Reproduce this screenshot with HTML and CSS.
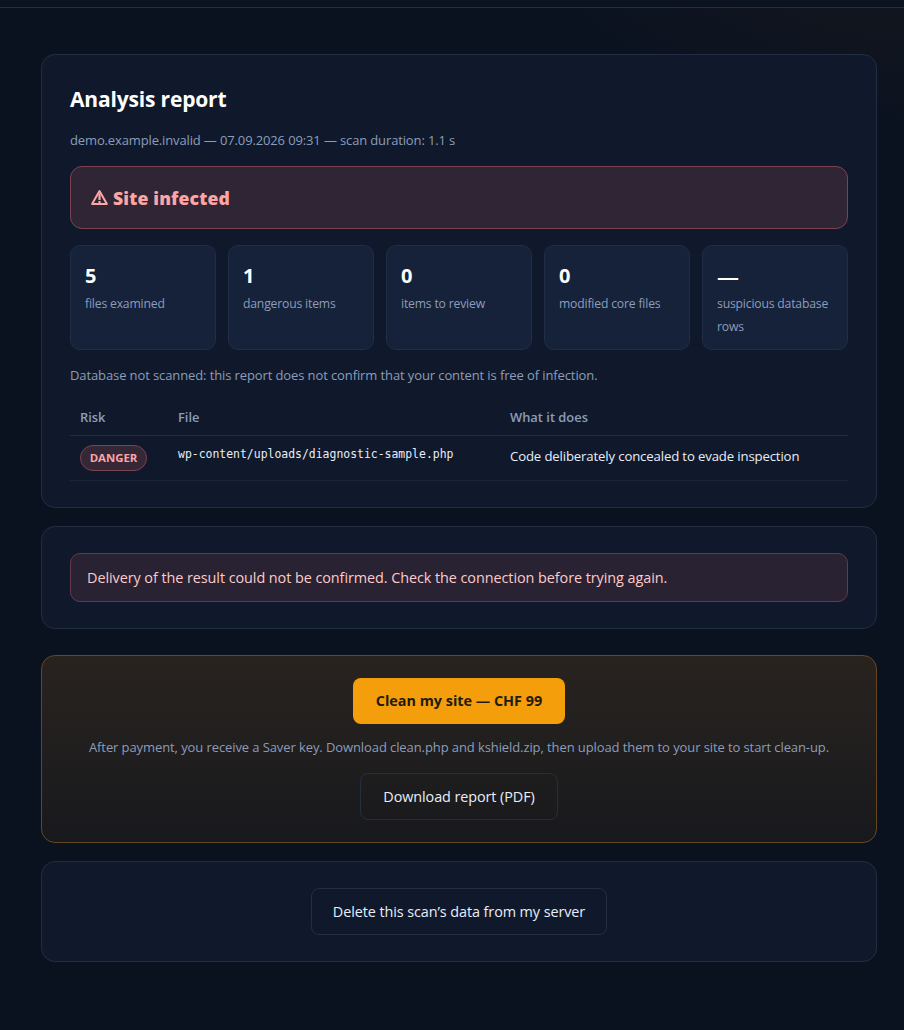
FILE: index.html
```html
<!DOCTYPE html>
<html lang="en">
<head>
<meta charset="utf-8">
<title>Analysis report</title>
<link rel="stylesheet" href="styles.css">
</head>
<body>
<header class="topbar"></header>
<main class="page">
  <section class="card report">
    <h1 class="title">Analysis report</h1>
    <p class="meta">demo.example.invalid — 07.09.2026 09:31 — scan duration: 1.1 s</p>
    <div class="verdict">
      <svg class="verdict-icon" width="18" height="17" viewBox="0 0 18 17" fill="none" stroke="currentColor"><path d="M8.5 2 15.9 15H1.1Z" stroke-width="2" stroke-linejoin="round"/><path d="M8.5 4.5V11M8.5 12V14" stroke-width="2.2"/></svg>
      <span>Site infected</span>
    </div>
    <div class="stats">
      <div class="stat"><b>5</b><span>files examined</span></div>
      <div class="stat"><b>1</b><span>dangerous items</span></div>
      <div class="stat"><b>0</b><span>items to review</span></div>
      <div class="stat"><b>0</b><span>modified core files</span></div>
      <div class="stat"><b class="empty">—</b><span>suspicious database rows</span></div>
    </div>
    <p class="note">Database not scanned: this report does not confirm that your content is free of infection.</p>
    <table class="findings">
      <thead><tr><th class="col-risk">Risk</th><th class="col-file">File</th><th>What it does</th></tr></thead>
      <tbody><tr>
        <td><span class="badge">DANGER</span></td>
        <td><code>wp-content/uploads/diagnostic-sample.php</code></td>
        <td class="desc">Code deliberately concealed to evade inspection</td>
      </tr></tbody>
    </table>
  </section>
  <section class="card">
    <div class="alert">Delivery of the result could not be confirmed. Check the connection before trying again.</div>
  </section>
  <section class="card offer">
    <button class="btn btn-primary">Clean my site — CHF 99</button>
    <p class="offer-note">After payment, you receive a Saver key. Download clean.php and kshield.zip, then upload them to your site to start clean-up.</p>
    <button class="btn btn-ghost btn-download">Download report (PDF)</button>
  </section>
  <section class="card actions">
    <button class="btn btn-ghost btn-delete">Delete this scan’s data from my server</button>
  </section>
</main>
</body>
</html>
```
FILE: styles.css
```css
* { box-sizing: border-box; }
body {
  margin: 0;
  min-height: 1030px;
  background: radial-gradient(500px 220px at 940px -50px, rgba(245, 158, 11, .045), transparent 80%), #0b121f;
  color: #e8eef8;
  font-family: "Open Sans", "Noto Sans", sans-serif;
  font-size: 14px;
  white-space: nowrap;
}
h1, p { margin: 0; }
.topbar { height: 8px; border-bottom: 1px solid #262f40; background: #0b1220; }
.page { padding: 46px 27px 0 41px; }
.card {
  padding: 26px 28px;
  margin-bottom: 18px;
  border: 1px solid #232d42;
  border-radius: 14px;
  background: #10192b;
}
.title { color: #fff; font-size: 21px; font-weight: 700; line-height: 36px; letter-spacing: -.17px; }
.meta, .note { color: #8b9dba; font-size: 13px; line-height: 23px; }
.meta { margin: 12px 0 14px; letter-spacing: -.135px; }
.note { letter-spacing: -.108px; }
.verdict {
  display: flex;
  align-items: center;
  gap: 4px;
  height: 63px;
  padding: 0 20px;
  border: 1px solid #7b4351;
  border-radius: 12px;
  background: #302534;
  color: #fca5a5;
  font-size: 17.6px;
  font-weight: 800;
  letter-spacing: .17px;
}
.verdict-icon { flex: none; }
.stats { display: grid; grid-template-columns: repeat(5, 1fr); gap: 12px; margin: 16px 0 14px; }
.stat {
  height: 105px;
  padding: 14px;
  border: 1px solid #212d45;
  border-radius: 10px;
  background: #16213a;
  white-space: normal;
}
.stat b { display: block; color: #fff; font-size: 20px; line-height: 32px; }
.stat .empty { font-size: 22px; font-weight: 600; }
.stat span { display: block; color: #8b9dba; font-size: 12.2px; line-height: 23px; letter-spacing: -.18px; }
.findings { width: 100%; margin-top: 12px; border-collapse: collapse; table-layout: fixed; }
.findings th { height: 36px; padding: 0 10px; border-bottom: 1px solid #232d40; color: #8b9dba; font-size: 12.9px; font-weight: 600; text-align: left; }
.findings td { height: 45px; padding: 9px 10px; border-bottom: 1px solid #1a2436; vertical-align: top; }
.col-risk { width: 98px; }
.col-file { width: 332px; }
.badge {
  display: block;
  width: 67px;
  height: 26px;
  border: 1px solid #7b4351;
  border-radius: 13px;
  background: #352736;
  color: #fca5a5;
  font-size: 11.4px;
  font-weight: 700;
  line-height: 24px;
  text-align: center;
}
.findings code { display: block; font-family: "DejaVu Sans Mono", monospace; font-size: 11.44px; line-height: 19px; }
.findings .desc { font-size: 13.2px; line-height: 23px; letter-spacing: -.15px; }
.alert {
  height: 49px;
  padding: 0 16px;
  border: 1px solid #663a49;
  border-radius: 10px;
  background: #292233;
  color: #fecaca;
  font-size: 14.4px;
  line-height: 47px;
  letter-spacing: -.06px;
}
.offer {
  display: flex;
  flex-direction: column;
  align-items: center;
  height: 188px;
  margin-top: 26px;
  padding: 22px 28px;
  border-color: #664820;
  background: linear-gradient(#29231f, #18191d);
}
.btn { padding: 0; border: 1px solid transparent; border-radius: 8px; font-family: inherit; font-size: 14.4px; white-space: nowrap; }
.btn-primary { width: 212px; height: 46px; background: #f59e0b; color: #231a10; font-weight: 700; }
.offer-note { margin: 12px 0 14px; color: #8b9dba; font-size: 13px; line-height: 23px; letter-spacing: -.094px; }
.btn-ghost { height: 47px; border-color: #232e42; background: transparent; color: #e8eef8; letter-spacing: -.08px; }
.btn-download { width: 198px; }
.actions { display: flex; justify-content: center; }
.btn-delete { width: 296px; }
```
